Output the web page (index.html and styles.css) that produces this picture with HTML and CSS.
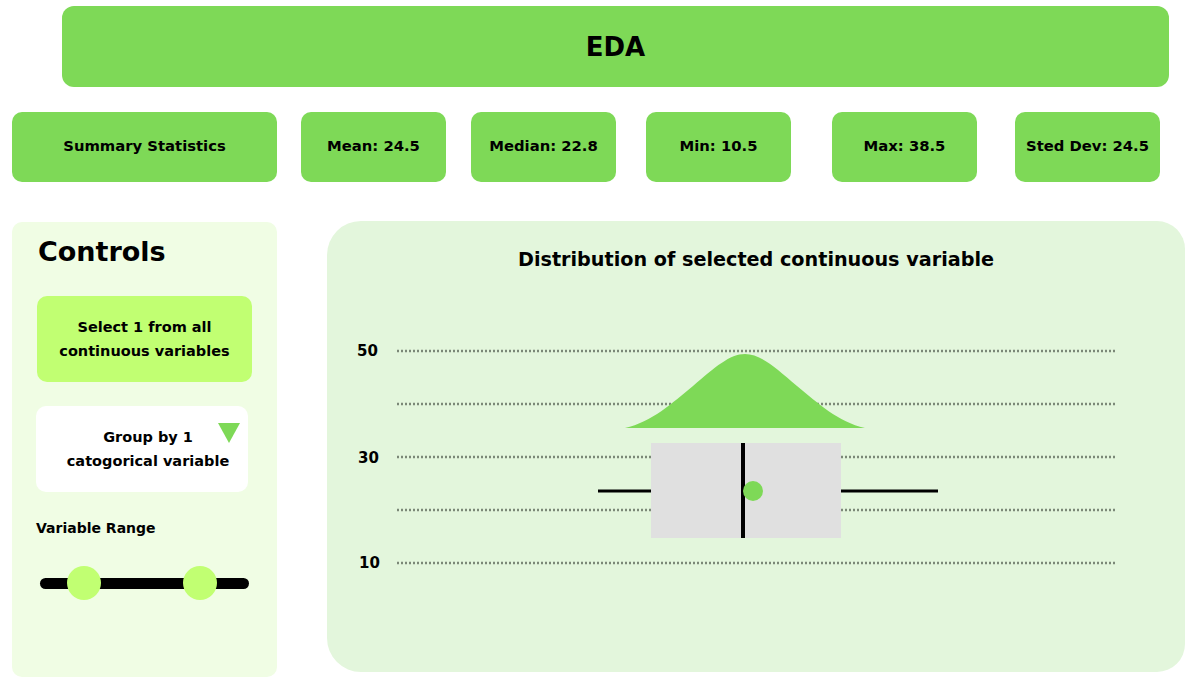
FILE: index.html
```html
<!DOCTYPE html>
<html lang="en">
<head>
    <meta charset="UTF-8">
    <meta name="viewport" content="width=device-width, initial-scale=1.0">
    <title>EDA</title>
    <link rel="stylesheet" href="styles.css">
</head>
<body>

    <!-- Header -->
    <div class="header">EDA</div>

    <!-- Summary stats -->
    <div class="stats">
        <div class="stat stat-wide">Summary Statistics</div>
        <div class="stat stat-mean">Mean: 24.5</div>
        <div class="stat stat-median">Median: 22.8</div>
        <div class="stat stat-min">Min: 10.5</div>
        <div class="stat stat-max">Max: 38.5</div>
        <div class="stat stat-std">Sted Dev: 24.5</div>
    </div>

    <div class="main">
        <!-- Controls -->
        <div class="controls">
            <h2>Controls</h2>
            <div class="select-box">Select 1 from all continuous variables</div>
            <div class="group-box">
                <span>Group by 1 catogorical variable</span>
                <div class="arrow"></div>
            </div>
            <div class="range-label">Variable Range</div>
            <div class="slider">
                <div class="thumb thumb-left"></div>
                <div class="thumb thumb-right"></div>
            </div>
        </div>

        <!-- Chart -->
        <div class="chart">
            <h3>Distribution of selected continuous variable</h3>
            <svg class="plot" width="858" height="340" viewBox="0 0 858 340">
                <g class="grid">
                    <line x1="70" y1="50" x2="788" y2="50"/>
                    <line x1="70" y1="103" x2="788" y2="103"/>
                    <line x1="70" y1="156" x2="788" y2="156"/>
                    <line x1="70" y1="209" x2="788" y2="209"/>
                    <line x1="70" y1="262" x2="788" y2="262"/>
                </g>
                <g class="axis-labels">
                    <text x="30" y="50">50</text>
                    <text x="31" y="157">30</text>
                    <text x="32" y="262">10</text>
                </g>
                <path class="curve" d="M298,127 C325,121 345,102 366,85 C388,66 403,53 418,53 C433,53 448,66 470,85 C491,102 511,121 538,127 Z"/>
                <line class="whisker" x1="271" y1="190" x2="324" y2="190"/>
                <line class="whisker" x1="514" y1="190" x2="611" y2="190"/>
                <rect class="box" x="324" y="142" width="190" height="95"/>
                <line class="median" x1="416" y1="142" x2="416" y2="237"/>
                <circle class="mean-dot" cx="426" cy="190" r="10"/>
            </svg>
        </div>
    </div>

</body>
</html>
```

FILE: styles.css
```css
body {
    margin: 0;
    font-family: "DejaVu Sans", "Liberation Sans", sans-serif;
    font-weight: 700;
    background-color: #fff;
    color: #000;
}

.header {
    margin: 6px 0 0 62px;
    width: 1107px;
    height: 81px;
    background-color: #7ed957;
    border-radius: 12px;
    display: flex;
    align-items: center;
    justify-content: center;
    font-size: 26px;
}

.stats {
    display: flex;
    margin: 25px 0 0 12px;
}

.stat {
    width: 145px;
    height: 70px;
    box-sizing: border-box;
    padding-bottom: 4px;
    background-color: #7ed957;
    border-radius: 10px;
    display: flex;
    align-items: center;
    justify-content: center;
    font-size: 14.8px;
}

.stat-wide { width: 265px; }
.stat-mean { margin-left: 24px; }
.stat-median { margin-left: 25px; }
.stat-min { margin-left: 30px; }
.stat-max { margin-left: 41px; }
.stat-std { margin-left: 38px; }

.main {
    display: flex;
    align-items: flex-start;
    margin: 39px 0 0 12px;
}

/* Controls panel */
.controls {
    width: 265px;
    height: 455px;
    margin-top: 1px;
    background-color: #f0fde4;
    border-radius: 10px;
    display: flex;
    flex-direction: column;
}

.controls h2 {
    margin: 14px 0 0 26px;
    font-size: 27px;
    line-height: 32px;
}

.select-box {
    margin: 28px 0 0 25px;
    width: 195px;
    height: 86px;
    padding: 0 10px;
    background-color: #c1ff72;
    border-radius: 10px;
    display: flex;
    align-items: center;
    justify-content: center;
    text-align: center;
    font-size: 14.5px;
    line-height: 24px;
}

.group-box {
    position: relative;
    margin: 24px 0 0 24px;
    width: 212px;
    height: 86px;
    background-color: #fff;
    border-radius: 10px;
    display: flex;
    align-items: center;
    justify-content: center;
    text-align: center;
    font-size: 14.5px;
    line-height: 24px;
}

.group-box span {
    width: 180px;
    margin-left: 12px;
}

.arrow {
    position: absolute;
    top: 17px;
    right: 8px;
    width: 0;
    height: 0;
    border-left: 11px solid transparent;
    border-right: 11px solid transparent;
    border-top: 20px solid #7ed957;
}

.range-label {
    margin: 28px 0 0 24px;
    font-size: 14px;
}

.slider {
    position: relative;
    margin: 42px 0 0 28px;
    width: 209px;
    height: 11px;
    background-color: #000;
    border-radius: 6px;
}

.thumb {
    position: absolute;
    top: -12px;
    width: 34px;
    height: 34px;
    border-radius: 50%;
    background-color: #c1ff72;
}

.thumb-left { left: 27px; }
.thumb-right { left: 143px; }

/* Chart panel */
.chart {
    margin-left: 50px;
    width: 858px;
    height: 451px;
    background-color: #e3f6dc;
    border-radius: 34px 28px 28px 34px;
}

.chart h3 {
    margin: 27px 0 0 0;
    text-align: center;
    font-size: 19.2px;
    line-height: 24px;
}

.plot {
    display: block;
    margin-top: 29px;
}

.grid line {
    stroke: #7b8877;
    stroke-width: 2.5;
    stroke-dasharray: 2 2;
}

.axis-labels text {
    font-family: "DejaVu Sans", "Liberation Sans", sans-serif;
    font-size: 15px;
    font-weight: 700;
    dominant-baseline: middle;
}

.curve { fill: #7ed957; }
.box { fill: #e0e0e0; }
.whisker { stroke: #000; stroke-width: 3; }
.median { stroke: #000; stroke-width: 4; }
.mean-dot { fill: #7ed957; }
```
